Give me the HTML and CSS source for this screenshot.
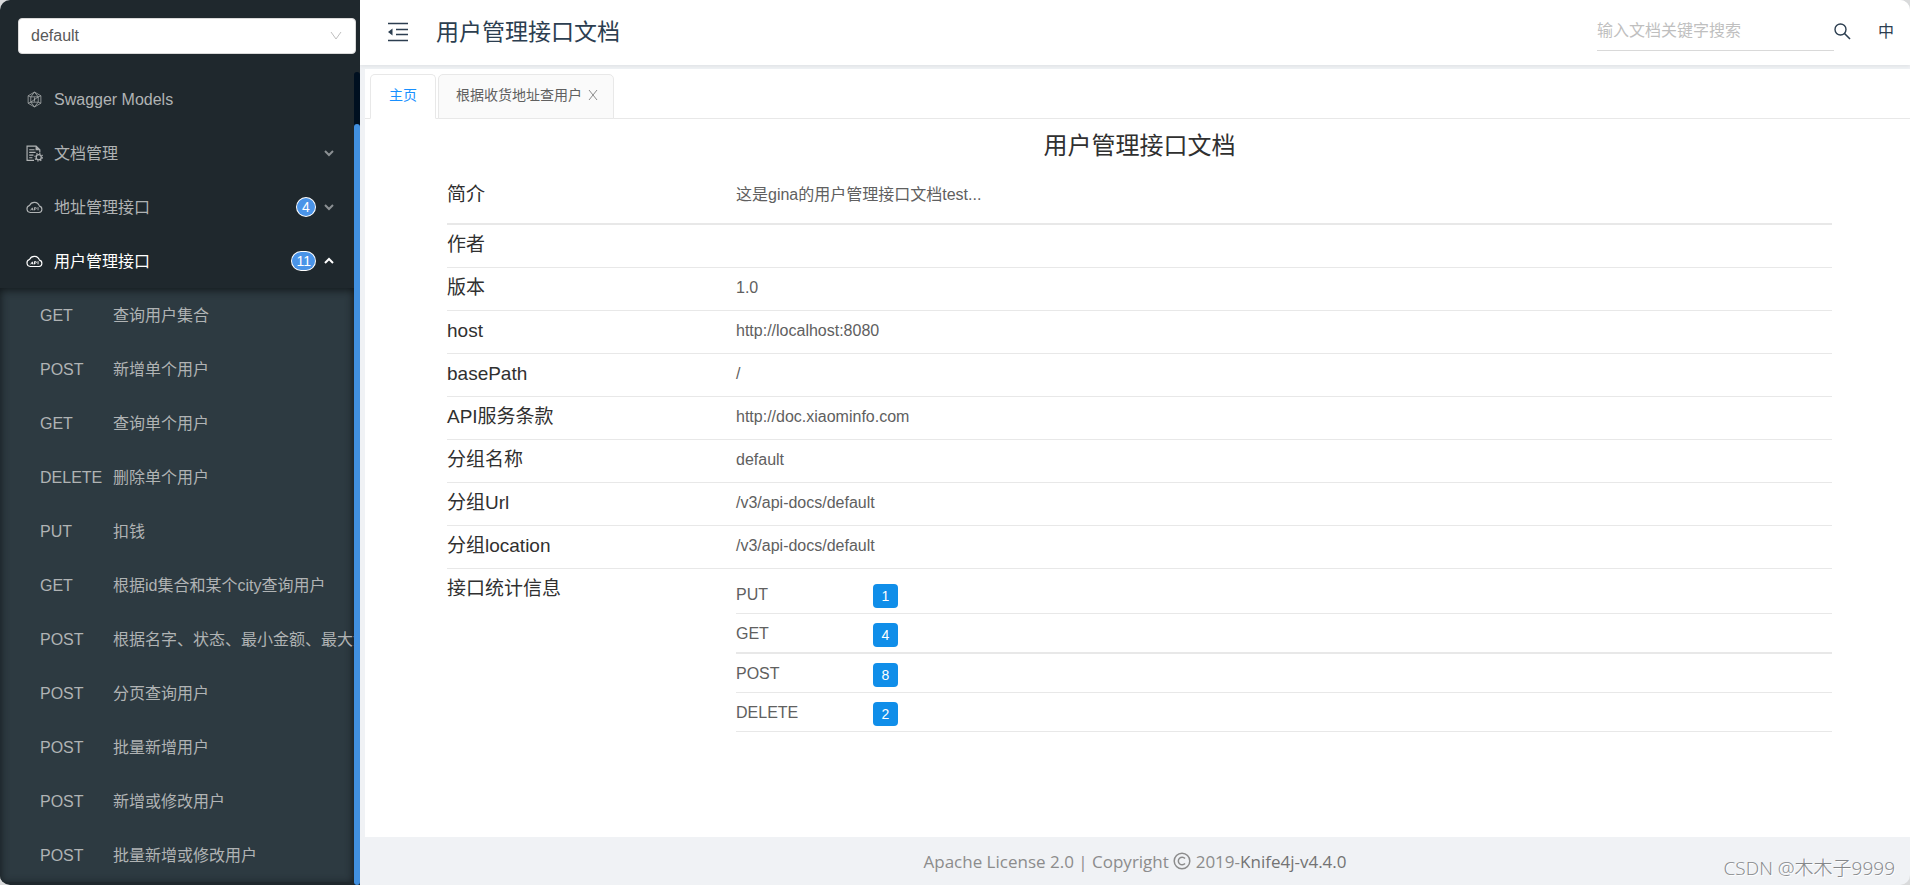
FILE: index.html
```html
<!DOCTYPE html>
<html lang="zh-CN">
<head>
<meta charset="utf-8">
<title>用户管理接口文档</title>
<link rel="stylesheet" href="styles.css">
</head>
<body>
<svg class="defs" aria-hidden="true">
  <symbol id="cloud" viewBox="0 0 24 24"><path d="M6 19a5 5 0 0 1-1-9.800A7.500 7.500 0 0 1 19 10a4.600 4.600 0 0 1-.500 9z" fill="none" stroke="currentColor" stroke-width="1.600"/><path d="M6.500 16l2.500-3.500 1 3.500M8 15h2M12 16v-4h1.500a1 1 0 0 1 0 2.200H12M17 11.500v4.500" fill="none" stroke="currentColor" stroke-width="1.300"/></symbol>
  <symbol id="arrow" viewBox="0 0 10 10"><path d="M1 3l4 4 4-4" fill="none" stroke="currentColor" stroke-width="2"/></symbol>
</svg>
<div class="app">
  <aside class="sidebar">
    <div class="group">
      <select class="group-select" aria-label="分组"><option>default</option></select>
      <svg class="group-arrow" viewBox="0 0 12 12" aria-hidden="true"><path d="M1 2l5 7 5-7" fill="none" stroke="currentColor"/></svg>
    </div>
    <nav class="menu">
      <div class="menu-items">
        <a class="item" href="#"><svg class="icon" viewBox="0 0 16 16"><path d="M8 1l6 3.500v7L8 15l-6-3.500v-7zM8 1L4.500 5.500 2 4.500M8 1l3.500 4.500 2.500-1M4.500 5.500h7v5h-7zM4.500 10.500L2 11.500M4.500 10.500L8 15l3.500-4.500 2.500 1M4.500 10.500l7-5M8 6v4" fill="none" stroke="currentColor" stroke-width=".7"/></svg><span class="name">Swagger Models</span></a>
        <a class="item" href="#"><svg class="icon" viewBox="0 0 16 16"><path d="M7.500 14.500H1V1h8.500L13 4.500V7M3 4.500h5M3 7h6M3 9.500h4M3 12h3" fill="none" stroke="currentColor" stroke-width="1.100"/><path d="M9 1l4 4H9z" fill="currentColor"/><circle cx="12" cy="11.500" r="2.400" fill="none" stroke="currentColor" stroke-width="1.200"/><circle cx="12" cy="11.500" r="3.600" fill="none" stroke="currentColor" stroke-width="1" stroke-dasharray="1.300 1.520"/></svg><span class="name">文档管理</span><svg class="arrow"><use href="#arrow"/></svg></a>
        <a class="item" href="#"><svg class="icon"><use href="#cloud"/></svg><span class="name">地址管理接口</span><span class="count">4</span><svg class="arrow"><use href="#arrow"/></svg></a>
        <a class="item open" href="#"><svg class="icon"><use href="#cloud"/></svg><span class="name">用户管理接口</span><span class="count">11</span><svg class="arrow up"><use href="#arrow"/></svg></a>
        <div class="submenu">
          <a class="sub" href="#"><span class="method">GET</span>查询用户集合</a>
          <a class="sub" href="#"><span class="method">POST</span>新增单个用户</a>
          <a class="sub" href="#"><span class="method">GET</span>查询单个用户</a>
          <a class="sub" href="#"><span class="method">DELETE</span>删除单个用户</a>
          <a class="sub" href="#"><span class="method">PUT</span>扣钱</a>
          <a class="sub" href="#"><span class="method">GET</span>根据id集合和某个city查询用户</a>
          <a class="sub" href="#"><span class="method">POST</span>根据名字、状态、最小金额、最大金额</a>
          <a class="sub" href="#"><span class="method">POST</span>分页查询用户</a>
          <a class="sub" href="#"><span class="method">POST</span>批量新增用户</a>
          <a class="sub" href="#"><span class="method">POST</span>新增或修改用户</a>
          <a class="sub" href="#"><span class="method">POST</span>批量新增或修改用户</a>
        </div>
      </div>
      <div class="track"><div class="thumb"></div></div>
    </nav>
  </aside>
  <div class="page">
    <header class="header">
      <button class="fold" aria-label="收起菜单"><svg viewBox="0 0 20 20"><path d="M0 1.500h20M8 7.500h12M8 12.500h12M0 18.500h20" stroke="currentColor" stroke-width="1.700"/><path d="M0 10l4.500-3.500v7z" fill="currentColor"/></svg></button>
      <h1 class="title">用户管理接口文档</h1>
      <input class="search" type="text" placeholder="输入文档关键字搜索" aria-label="搜索">
      <button class="find" aria-label="搜索"><svg viewBox="0 0 17 17"><circle cx="6.500" cy="6.500" r="5.500" fill="none" stroke="currentColor" stroke-width="1.400"/><path d="M10.500 10.500l5.500 5.500" stroke="currentColor" stroke-width="1.600"/></svg></button>
      <button class="lang">中</button>
    </header>
    <main class="content">
      <div class="tabs">
        <button class="tab active">主页</button>
        <div class="tab"><button class="tab-name">根据收货地址查用户</button><button class="close" aria-label="关闭"><svg viewBox="0 0 10 12"><path d="M1 1l8 10M9 1L1 11" stroke="currentColor"/></svg></button></div>
      </div>
      <section class="doc">
        <h2 class="doc-title">用户管理接口文档</h2>
        <dl class="info">
          <div class="row intro"><dt>简介</dt><dd>这是gina的用户管理接口文档test...</dd></div>
          <div class="row"><dt>作者</dt><dd></dd></div>
          <div class="row"><dt>版本</dt><dd>1.0</dd></div>
          <div class="row"><dt>host</dt><dd>http://localhost:8080</dd></div>
          <div class="row"><dt>basePath</dt><dd>/</dd></div>
          <div class="row"><dt>API服务条款</dt><dd>http://doc.xiaominfo.com</dd></div>
          <div class="row"><dt>分组名称</dt><dd>default</dd></div>
          <div class="row"><dt>分组Url</dt><dd>/v3/api-docs/default</dd></div>
          <div class="row"><dt>分组location</dt><dd>/v3/api-docs/default</dd></div>
          <div class="row stats"><dt>接口统计信息</dt><dd>
            <div class="stat"><span class="verb">PUT</span><span class="tag">1</span></div>
            <div class="stat heavy"><span class="verb">GET</span><span class="tag">4</span></div>
            <div class="stat"><span class="verb">POST</span><span class="tag">8</span></div>
            <div class="stat"><span class="verb">DELETE</span><span class="tag">2</span></div>
          </dd></div>
        </dl>
      </section>
    </main>
    <footer class="footer">Apache License 2.0 | Copyright <svg class="copy" viewBox="0 0 18 18"><circle cx="9" cy="9" r="7.800" fill="none" stroke="currentColor" stroke-width="1.500"/><path d="M12 6.500a3.800 3.800 0 1 0 0 5" fill="none" stroke="currentColor" stroke-width="1.500"/></svg> 2019-<a class="brand" href="#">Knife4j-v4.4.0</a></footer>
  </div>
  <div class="watermark">CSDN @木木子9999</div>
</div>
</body>
</html>
```
FILE: styles.css
```css
* { box-sizing: border-box; }
body {
  margin: 0;
  background: #d9dadb;
  font-family: "Liberation Sans", "Noto Sans CJK SC", sans-serif;
  font-size: 16px;
  color: #606060;
}
a { color: inherit; text-decoration: none; }
button { border: 0; padding: 0; background: none; font: inherit; color: inherit; }
.defs { position: absolute; width: 0; height: 0; }
.app { position: relative; display: flex; height: 100vh; border-radius: 10px; overflow: hidden; background: #f0f2f5; }

.sidebar { position: relative; z-index: 1; width: 360px; flex: none; display: flex; flex-direction: column; background: #1f282d; }
.group { position: relative; padding: 18px 4px 18px 18px; }
.group-select {
  appearance: none; display: block; width: 100%; height: 36px; padding: 0 12px 2px;
  border: 1px solid #d9d9d9; border-radius: 4px; background: #fff; color: #595959; font: inherit;
}
.group-arrow { position: absolute; right: 18px; top: 30px; width: 12px; height: 12px; color: #bfbfbf; }
.menu { flex: 1; min-height: 0; display: flex; overflow: hidden; }
.menu-items { flex: 1; min-width: 0; color: #b0b3b4; }
.item { display: flex; align-items: center; height: 54px; padding: 0 20px 0 26px; }
.item.open { color: #fff; }
.icon { width: 17px; height: 17px; margin-right: 11px; flex: none; }
.name { flex: 1; padding-top: 2px; line-height: 52px; }
.arrow { width: 10px; height: 10px; color: #8b9093; }
.arrow.up { transform: rotate(180deg); color: #fff; }
.count {
  min-width: 18px; height: 18px; margin-right: 9px; padding: 0 4px; border-radius: 10px; background: #4a94e8;
  box-shadow: 0 0 0 1px #fff; color: #fff; font-size: 14px; line-height: 18px; text-align: center;
}
.submenu { background: #2d3a41; box-shadow: inset 0 2px 9px #12181b; }
.sub { display: flex; height: 54px; padding: 2px 0 0 40px; line-height: 52px; white-space: nowrap; overflow: hidden; }
.method { width: 73px; flex: none; }
.track { width: 6px; border-radius: 3px; background: #001020; padding-top: 52px; }
.thumb { height: 100%; border-radius: 3px; background: #4190e0; }

.page { flex: 1; min-width: 0; display: flex; flex-direction: column; }
.header {
  display: flex; align-items: center; flex: none; height: 65px; padding: 0 16px 2px 28px;
  background: #fff; box-shadow: 0 1px 4px #dcdfe2; color: #2c3e50;
}
.fold, .fold svg { display: block; width: 20px; height: 20px; }
.fold { margin-right: 28px; }
.title { flex: 1; margin: 0; font-size: 23px; font-weight: 400; line-height: 32px; }
.search {
  width: 237px; height: 38px; padding: 0; border: 0; border-bottom: 1px solid #d9d9d9;
  background: none; font: inherit; color: inherit;
}
.search::placeholder { color: #bfbfbf; opacity: 1; }
.find, .find svg { display: block; width: 17px; height: 17px; }
.find { margin-right: 27px; }
.lang { line-height: 24px; }
.content { flex: 1; margin: 4px 0 0 5px; background: #fff; }
.tabs { display: flex; gap: 2px; padding: 5px 0 0 5px; box-shadow: inset 0 -1px #e8e8e8; }
.tab {
  display: flex; align-items: center; gap: 6px; height: 45px; padding: 0 15px 4px 17px;
  border: 1px solid #e8e8e8; border-radius: 5px 5px 0 0; background: #fafafa; font-size: 14px; line-height: 20px;
}
.tab.active { padding: 0 18px 4px; border-bottom-color: #fff; background: #fff; color: #1890ff; }
.close, .close svg { display: block; width: 10px; height: 12px; color: #8c8c8c; }
.doc { padding: 9px 78px 0 82px; }
.doc-title { margin: 0; font-size: 24px; line-height: 36px; font-weight: 400; text-align: center; color: #303030; }
.info { margin: 7px 0 0; }
.row { display: flex; height: 43px; border-bottom: 1px solid #e8e8e8; line-height: 40px; }
.row.intro { height: 54px; border-bottom-width: 2px; line-height: 48px; }
.row.stats { height: auto; border: 0; }
dt { width: 289px; flex: none; font-size: 19px; color: #303030; }
dd { flex: 1; margin: 0; }
.stats dd { padding-top: 6px; }
.stat { display: flex; height: 39px; padding-top: 9px; border-bottom: 1px solid #e8e8e8; line-height: 22px; }
.stat.heavy { height: 40px; border-bottom-width: 2px; }
.verb { width: 137px; }
.tag {
  width: 25px; height: 24px; border-radius: 4px; background: #108ee9; color: #fff;
  font-size: 14px; line-height: 24px; text-align: center;
}
.footer {
  display: flex; align-items: center; justify-content: center; flex: none; height: 48px;
  font-family: "Open Sans", "Noto Sans", sans-serif; font-size: 17px; white-space: pre; color: #8c8c8c;
}
.copy { width: 18px; height: 18px; }
.brand { color: #737373; }
.watermark {
  position: absolute; right: 15px; bottom: 5px; color: #85878a; line-height: 24px; font-size: 19px;
  font-family: "Open Sans", "Noto Sans CJK SC", sans-serif; font-weight: 300; text-shadow: 1px 1px #fff;
}
```
